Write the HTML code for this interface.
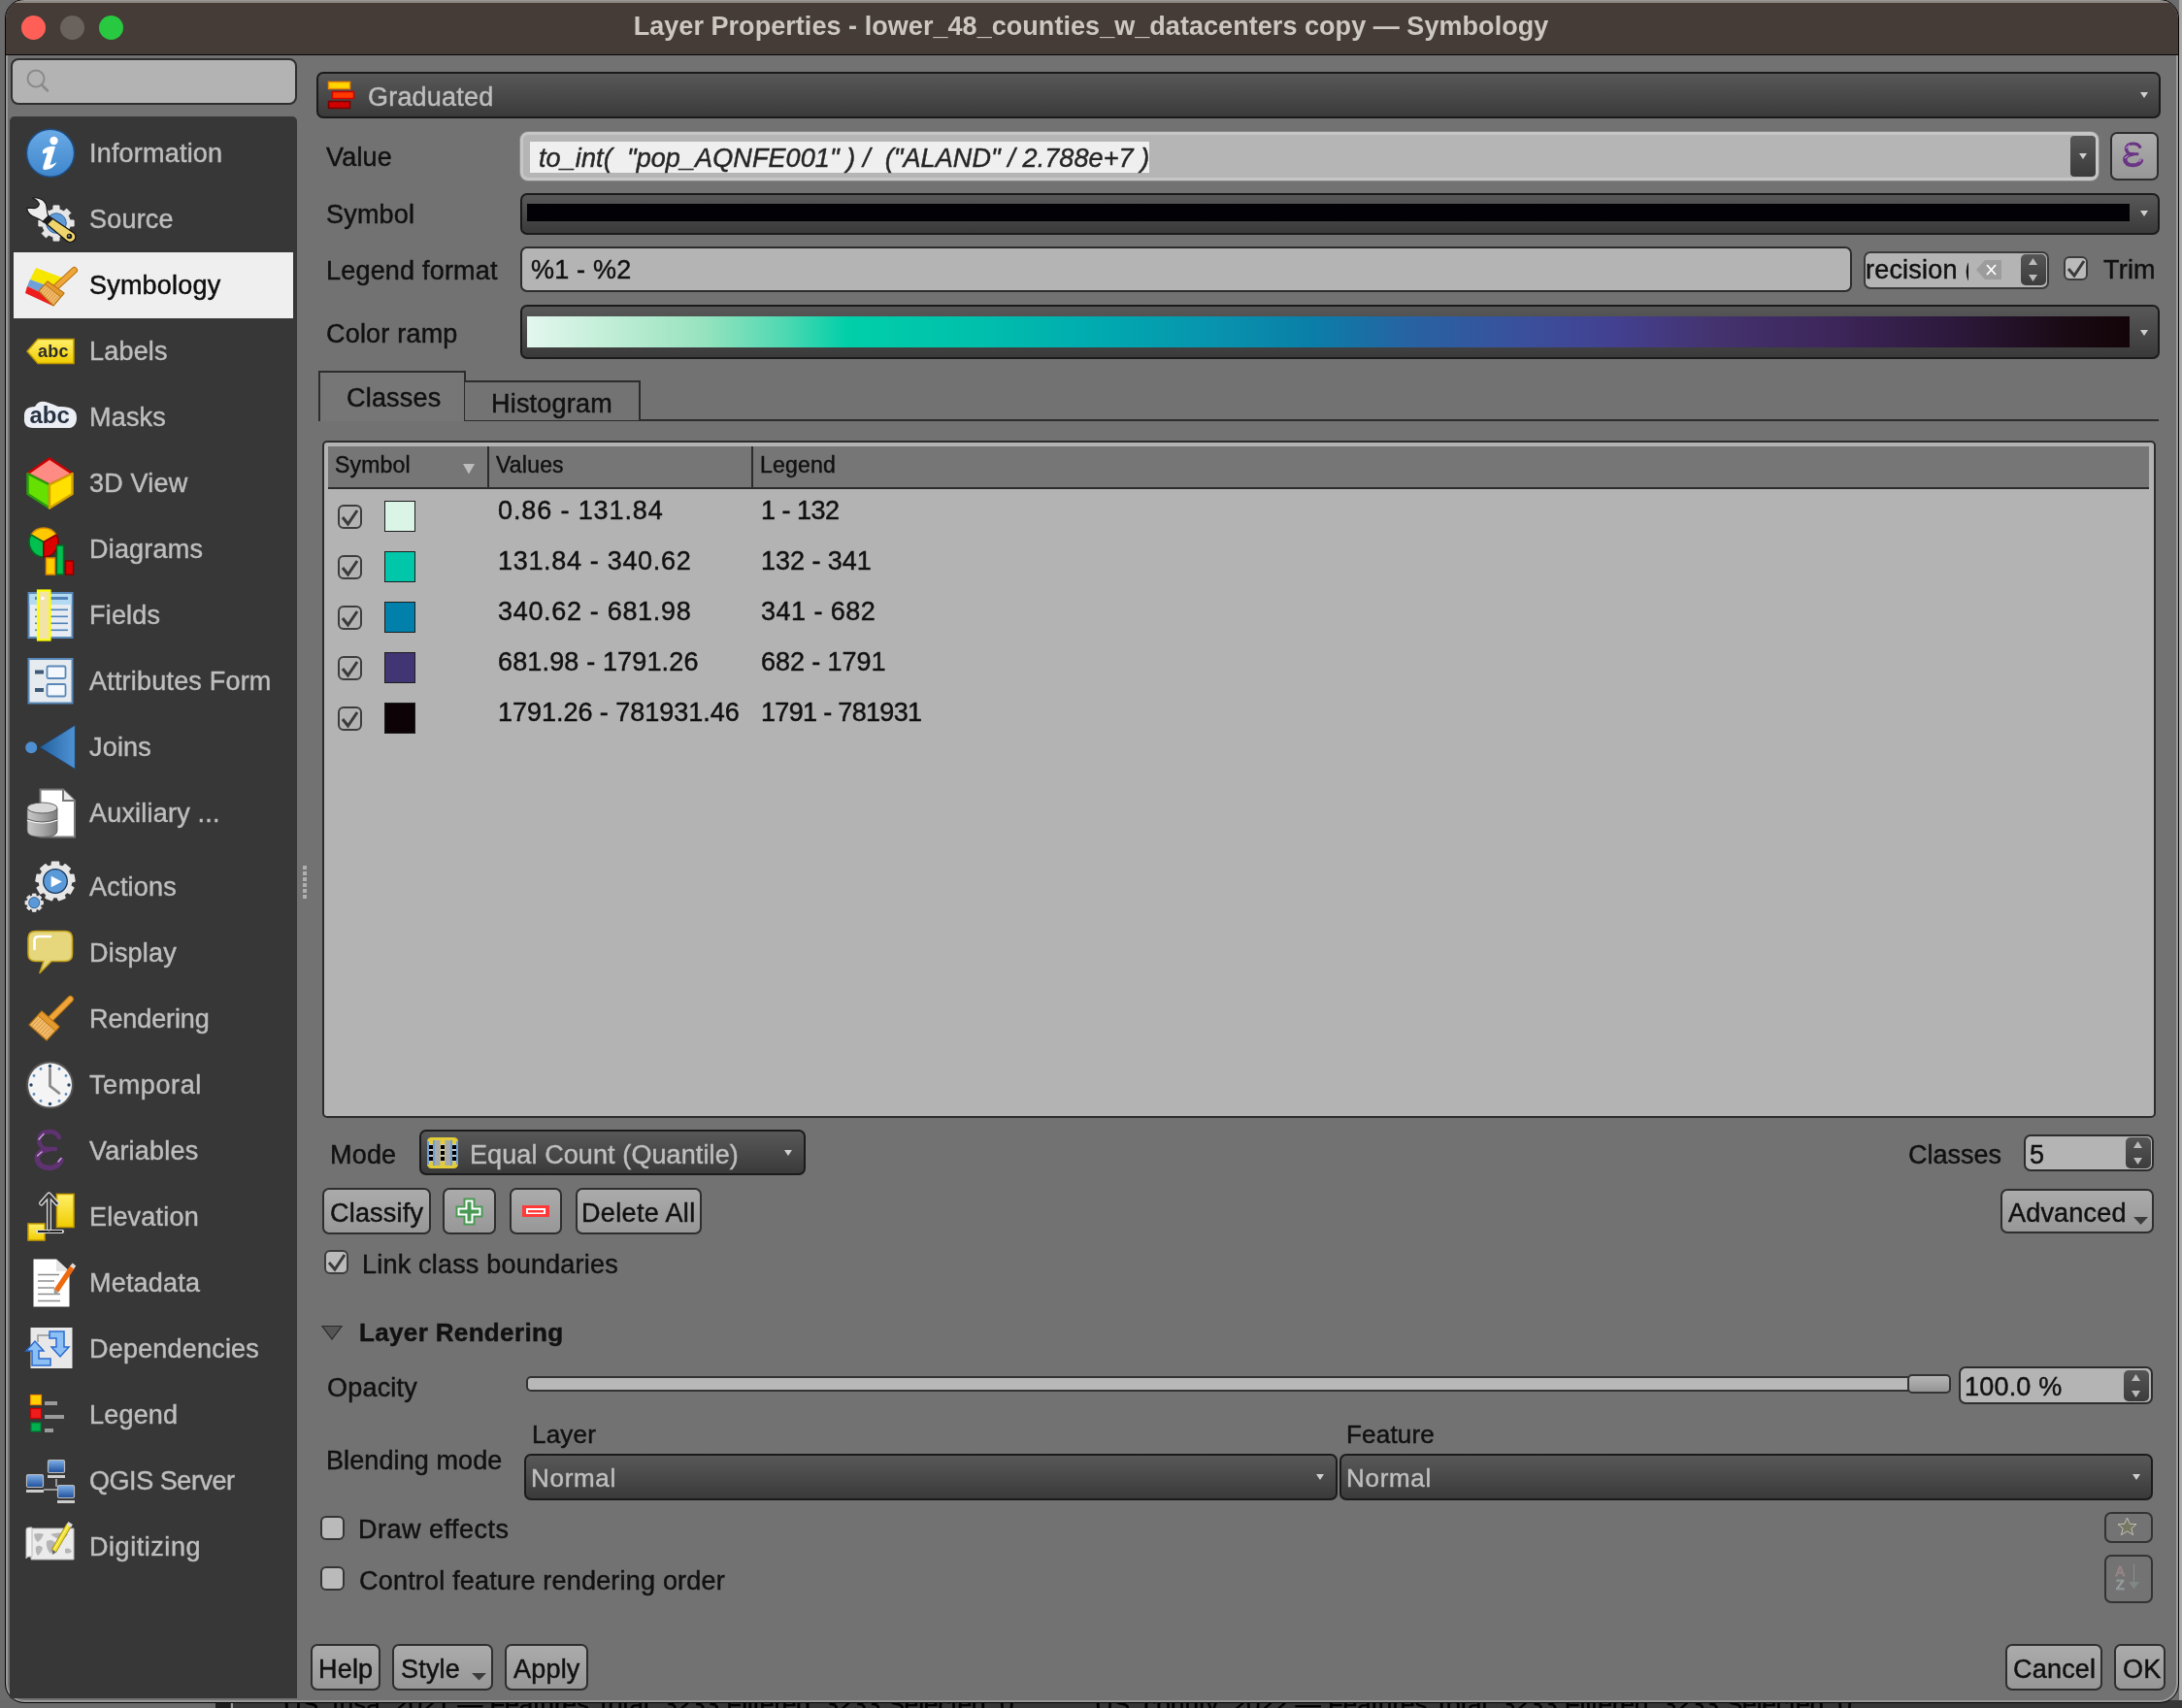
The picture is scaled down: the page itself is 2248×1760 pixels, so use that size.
<!DOCTYPE html>
<html><head><meta charset="utf-8">
<style>
*{box-sizing:border-box;margin:0;padding:0}
html,body{width:2248px;height:1760px;overflow:hidden;background:#6c6c6c;font-family:"Liberation Sans",sans-serif;position:relative}
.a{position:absolute}
.t{position:absolute;white-space:nowrap;font-size:27px;line-height:1;color:#111;-webkit-text-stroke:0.45px currentColor;letter-spacing:0.2px;will-change:transform}
.s{color:#bebebe}
.dark{position:absolute;background:linear-gradient(#585858,#3a3a3a);border:2px solid #1b1b1b;border-radius:7px}
.light{position:absolute;background:#b4b4b4;border:2px solid #2c2c2c;border-radius:7px}
.btn{position:absolute;background:linear-gradient(#ababab,#979797);border:2px solid #2e2e2e;border-radius:7px}
.cb{position:absolute;width:25px;height:25px;border:2px solid #3c3c3c;border-radius:6px;background:#bababa}
.spin{position:absolute;width:26px;background:linear-gradient(#555,#3c3c3c);border-radius:5px}
svg{position:absolute;overflow:visible}
</style></head><body>
<!-- background strip below window -->
<div class="a" style="left:2245px;top:0;width:3px;height:1760px;background:#aaa"></div>
<div class="a" style="left:0;top:1752px;width:2248px;height:8px;background:#363636;overflow:hidden">
  <div class="a" style="left:0;top:0;width:222px;height:8px;background:#6a6a6a"></div>
  <div class="a" style="left:222px;top:0;width:15px;height:8px;background:#1e1e1e"></div><div class="a" style="left:238px;top:0;width:2px;height:8px;background:#9a9a9a"></div>
  <div class="t" style="left:292px;top:-9px;font-size:26px;color:#000;letter-spacing:0">US_tusa_2021 — Features Total: 3233 Filtered: 3233 Selected: 0</div>
  <div class="t" style="left:1128px;top:-9px;font-size:26px;color:#000;letter-spacing:0">US_county_2022 — Features Total: 3233 Filtered: 3233 Selected: 0</div>
</div>
<!-- window -->
<div class="a" style="left:5px;top:-1px;width:2240px;height:1756px;border-radius:20px;background:#727272;border:1px solid #050505;overflow:hidden;box-shadow:inset 0 0 0 2px #999">
  <div class="a" style="left:0;top:3px;width:100%;height:54px;background:#453c37;border-bottom:1px solid #050505"></div>
  <div class="a" style="left:0;top:1px;width:100%;height:2px;background:#8f8781"></div>
</div>
<div class="a" style="left:22px;top:16px;width:25px;height:25px;border-radius:50%;background:#ff5f57"></div>
<div class="a" style="left:62px;top:16px;width:25px;height:25px;border-radius:50%;background:#6a625c"></div>
<div class="a" style="left:102px;top:16px;width:25px;height:25px;border-radius:50%;background:#28c840"></div>
<div class="t" style="left:0;top:14px;width:2248px;text-align:center;font-weight:bold;font-size:27px;color:#cdc7c2;-webkit-text-stroke:0;letter-spacing:0.05px">Layer Properties - lower_48_counties_w_datacenters copy — Symbology</div>

<!-- search -->
<div class="a" style="left:11px;top:60px;width:295px;height:48px;background:#b3b3b3;border:2px solid #2f2f2f;border-radius:8px"></div>
<svg style="left:0;top:0" width="1" height="1"><circle cx="37" cy="81" r="8.5" fill="none" stroke="#8a8a8a" stroke-width="2"/><line x1="43" y1="87.5" x2="49" y2="93.5" stroke="#8a8a8a" stroke-width="2.5" stroke-linecap="round"/></svg>

<!-- sidebar -->
<div class="a" style="left:10px;top:120px;width:296px;height:1630px;background:#373737;border-radius:5px 5px 0 0"></div>
<div class="a" style="left:14px;top:260px;width:288px;height:68px;background:#efefef"></div>
<div class="a" style="left:312px;top:892px;width:4px;height:34px;background:repeating-linear-gradient(#b0b0b0 0 4px,transparent 4px 6px)"></div>

<div class="t s" style="left:92px;top:145px">Information</div>
<div class="t s" style="left:92px;top:213px">Source</div>
<div class="t" style="left:92px;top:281px;color:#0d0d0d">Symbology</div>
<div class="t s" style="left:92px;top:349px">Labels</div>
<div class="t s" style="left:92px;top:417px">Masks</div>
<div class="t s" style="left:92px;top:485px">3D View</div>
<div class="t s" style="left:92px;top:553px">Diagrams</div>
<div class="t s" style="left:92px;top:621px">Fields</div>
<div class="t s" style="left:92px;top:689px">Attributes Form</div>
<div class="t s" style="left:92px;top:757px">Joins</div>
<div class="t s" style="left:92px;top:825px">Auxiliary ...</div>
<div class="t s" style="left:92px;top:901px">Actions</div>
<div class="t s" style="left:92px;top:969px">Display</div>
<div class="t s" style="left:92px;top:1037px;letter-spacing:-0.1px">Rendering</div>
<div class="t s" style="left:92px;top:1105px;letter-spacing:0.6px">Temporal</div>
<div class="t s" style="left:92px;top:1173px">Variables</div>
<div class="t s" style="left:92px;top:1241px">Elevation</div>
<div class="t s" style="left:92px;top:1309px">Metadata</div>
<div class="t s" style="left:92px;top:1377px">Dependencies</div>
<div class="t s" style="left:92px;top:1445px">Legend</div>
<div class="t s" style="left:92px;top:1513px;letter-spacing:-0.45px">QGIS Server</div>
<div class="t s" style="left:92px;top:1581px;letter-spacing:0.55px">Digitizing</div>
<svg style="left:0;top:0" width="1" height="1">
<defs>
  <linearGradient id="gblue" x1="0" y1="0" x2="0" y2="1"><stop offset="0" stop-color="#6aaae6"/><stop offset="1" stop-color="#3f86cc"/></linearGradient>
  <linearGradient id="gjoin" x1="0" y1="0" x2="1" y2="0"><stop offset="0" stop-color="#24609c"/><stop offset="1" stop-color="#4e93d6"/></linearGradient>
  <linearGradient id="gcyl" x1="0" y1="0" x2="1" y2="0"><stop offset="0" stop-color="#c8c8c8"/><stop offset="0.5" stop-color="#a8a8a8"/><stop offset="1" stop-color="#7a7a7a"/></linearGradient>
  <linearGradient id="gyel" x1="0" y1="0" x2="0" y2="1"><stop offset="0" stop-color="#fff06a"/><stop offset="1" stop-color="#f0cc00"/></linearGradient>
  <linearGradient id="gscr" x1="0" y1="0" x2="0" y2="1"><stop offset="0" stop-color="#7fb0e8"/><stop offset="1" stop-color="#1e4f9a"/></linearGradient>
</defs>
<!-- Information -->
<circle cx="52" cy="157.7" r="24.5" fill="url(#gblue)" stroke="#1f4f86" stroke-width="1.5"/>
<circle cx="55.5" cy="145" r="4.2" fill="#fff"/>
<path d="M44 155 Q49 150 57 151 L51.5 170 Q55 169.5 58.5 167 Q55 174.5 46.5 175 Q43.5 175 44.5 171.5 L48.8 157.5 Q46.5 157.5 44 158.5 Z" fill="#fff"/>
<!-- Source -->
<g>
  <path d="M72.2 226.9 L76.1 227.0 L76.1 233.0 L72.2 233.1 L70.2 237.8 L72.9 240.6 L68.6 244.9 L65.8 242.2 L61.1 244.2 L61.0 248.1 L55.0 248.1 L54.9 244.2 L50.2 242.2 L47.4 244.9 L43.1 240.6 L45.8 237.8 L43.8 233.1 L39.9 233.0 L39.9 227.0 L43.8 226.9 L45.8 222.2 L43.1 219.4 L47.4 215.1 L50.2 217.8 L54.9 215.8 L55.0 211.9 L61.0 211.9 L61.1 215.8 L65.8 217.8 L68.6 215.1 L72.9 219.4 L70.2 222.2 Z" fill="#e6e6e6" stroke="#e6e6e6" stroke-width="1" stroke-linejoin="round"/>
  <circle cx="58" cy="230" r="10.3" fill="#5f9bd6" stroke="#3a6aa0" stroke-width="1"/>
  <path d="M33.4 204 C40 203 47 206 48 213 C48.5 218 48.5 221 50.5 223.5 L45 229 C42 226.5 38 224.5 33 222.5 C30 220.5 28 217.5 27.7 214.2 L33 214.5 C36.5 215 39 213.5 40 211.5 C41 209 38 206 33.4 204 Z" fill="#ececec" stroke="#111" stroke-width="1.1" stroke-linejoin="round"/>
  <path d="M50 222.5 L76 240 C78.5 242 78.5 246 76 248 C74 250 70.5 250 68.5 248 L44.5 228 Z" fill="#efd56c" stroke="#111" stroke-width="1.2" stroke-linejoin="round"/>
  <path d="M50 222.5 L54.5 226 L49 231.5 L44.5 228 Z" fill="#1e1e1e"/>
  <circle cx="71.5" cy="243.5" r="2.8" fill="#1a1a1a"/><circle cx="71" cy="243" r="1" fill="#999"/>
</g>
<!-- Symbology -->
<g>
  <path d="M37 276 L64 286 L58 298 L31 288 Z" fill="#f7e600"/>
  <path d="M31 288 L58 298 L52 306 L28 295 Z" fill="#6fa0d8"/>
  <path d="M28 295 L52 306 L54 315 L26 302 Z" fill="#ee1c1c"/>
<path d="M57.5 296.0 L76.5 278.5" stroke="#b8740e" stroke-width="7" stroke-linecap="round"/>
<path d="M57.5 296.0 L76.5 278.5" stroke="#eea53a" stroke-width="5" stroke-linecap="round"/>
<path d="M49 290 L66 302 L55 315 L40 300 Z" fill="#f3bc6a" stroke="#b8740e" stroke-width="1.2" stroke-linejoin="round"/>
<path d="M48.3 294.6 L41.9 301.9 M50.4 296.2 L43.8 303.8 M52.5 297.8 L45.6 305.6 M54.5 299.4 L47.5 307.5 M56.5 301.1 L49.4 309.4 M58.6 302.7 L51.2 311.2 M60.7 304.3 L53.1 313.1" stroke="#c98a3a" stroke-width="0.8"/>
<path d="M49 290 L66 302 L62.7 305.9 L46.3 293.0 Z" fill="#e59a30" stroke="#b8740e" stroke-width="1"/>
</g>
<!-- Labels -->
<path d="M28 362 L39 349.5 L76 349.5 L76 374.5 L39 374.5 Z" fill="url(#gyel)" stroke="#c09a00" stroke-width="1.5"/>
<text x="39" y="368" font-family="Liberation Sans" font-weight="bold" font-size="18" fill="#2b2b2b" letter-spacing="0.3">abc</text>
<!-- Masks -->
<path d="M34 441 Q24 441 25 430 Q24 419 36 419 Q40 411 50 415 Q56 417 60 419 Q79 418 79 430 Q79 442 68 441 Z" fill="#eceef6"/>
<text x="30.5" y="435.5" font-family="Liberation Sans" font-weight="bold" font-size="24" fill="#263241">abc</text>
<!-- 3D View -->
<path d="M51 472.5 L74.5 488 L51 499.5 L28.5 488 Z" fill="#ff8c84" stroke="#cc0000" stroke-width="2.5" stroke-linejoin="round"/>
<path d="M28.5 488 L51 499.5 L51 523.5 L28.5 509 Z" fill="#66e000" stroke="#2a9a10" stroke-width="2.5" stroke-linejoin="round"/>
<path d="M74.5 488 L51 499.5 L51 523.5 L74.5 509 Z" fill="#ffe000" stroke="#d4a200" stroke-width="2.5" stroke-linejoin="round"/>
<!-- Diagrams -->
<path d="M45 558.5 L32 551 A15.5 15.5 0 0 1 58 551 Z" fill="#ffc800" stroke="#d08a00" stroke-width="1.5"/>
<path d="M45 558.5 L32 551 A15.5 15.5 0 0 0 45 574 Z" fill="#00c050" stroke="#006a20" stroke-width="1.5"/>
<path d="M45 558.5 L58 551 A15.5 15.5 0 0 1 45 574 Z" fill="#dd0000" stroke="#880000" stroke-width="1.5"/>
<rect x="47.5" y="575" width="9" height="17" fill="#ffcc00" stroke="#e08a00" stroke-width="1.5"/>
<rect x="58.5" y="562" width="7" height="30" fill="#00c050" stroke="#006a20" stroke-width="1.5"/>
<rect x="67.5" y="578" width="8" height="14" fill="#dd0000" stroke="#880000" stroke-width="1.5"/>
<!-- Fields -->
<rect x="29.5" y="611" width="45" height="46" fill="#e6ecf2" stroke="#5a88b8" stroke-width="2"/>
<rect x="30.5" y="612" width="43" height="11" fill="#b2daf2"/>
<rect x="36" y="615" width="17" height="3" fill="#5082b8"/><rect x="52" y="615" width="18" height="3" fill="#5082b8"/>
<g fill="#5082b8"><rect x="36" y="627.5" width="34" height="1.6"/><rect x="36" y="634.5" width="34" height="1.6"/><rect x="36" y="641.5" width="34" height="1.6"/><rect x="36" y="648.5" width="34" height="1.6"/></g>
<rect x="39" y="608.5" width="12.5" height="51" fill="#f1e4a6" stroke="#ffff00" stroke-width="2.2"/>
<rect x="42.5" y="615" width="3" height="3" fill="#fff"/>
<!-- Attributes Form -->
<rect x="29.5" y="679" width="45" height="45.5" fill="#e6ebf0" stroke="#5a88b8" stroke-width="2"/>
<rect x="36" y="690.5" width="9" height="4" fill="#3d5a78"/><rect x="36" y="709" width="9" height="4" fill="#3d5a78"/>
<rect x="48.5" y="686.5" width="19" height="12.5" rx="1.5" fill="#f4f8fc" stroke="#5a88b8" stroke-width="1.8"/>
<rect x="48.5" y="705" width="19" height="12.5" rx="1.5" fill="#f4f8fc" stroke="#5a88b8" stroke-width="1.8"/>
<!-- Joins -->
<circle cx="32.2" cy="770.2" r="6" fill="#4e8fd4"/>
<path d="M40.8 770 L77.3 747.3 L77.3 792.4 Z" fill="url(#gjoin)" stroke="#1e3e66" stroke-width="0.8"/>
<!-- Auxiliary -->
<path d="M41.5 813.5 L65 813.5 L77 825 L77 862.5 L41.5 862.5 Z" fill="#fff" stroke="#777" stroke-width="2"/>
<path d="M65 813.5 L65 825 L77 825" fill="#e8e8e8" stroke="#777" stroke-width="2"/>
<path d="M28 833 L28 856 Q28 862.5 43.5 862.5 Q59 862.5 59 856 L59 833 Z" fill="url(#gcyl)" stroke="#555" stroke-width="0.8"/>
<ellipse cx="43.5" cy="832.5" rx="15.5" ry="5.5" fill="#d8d8d8" stroke="#444" stroke-width="0.8"/>
<path d="M28 845 Q43.5 851 59 845" fill="none" stroke="#eee" stroke-width="1.5"/>
<path d="M28 844 Q43.5 850 59 844" fill="none" stroke="#444" stroke-width="0.8"/>
<!-- Actions -->
<g>
  <path d="M53.3 891.9 L53.5 888.3 L60.5 888.3 L60.7 891.9 L64.5 893.3 L67.0 890.7 L72.3 895.1 L70.2 898.1 L72.2 901.6 L75.8 901.2 L77.0 908.0 L73.5 908.9 L72.8 912.8 L75.8 914.8 L72.3 920.9 L69.1 919.3 L66.0 921.8 L67.0 925.3 L60.5 927.7 L59.0 924.4 L55.0 924.4 L53.5 927.7 L47.0 925.3 L48.0 921.8 L44.9 919.3 L41.7 920.9 L38.2 914.8 L41.2 912.8 L40.5 908.9 L37.0 908.0 L38.2 901.2 L41.8 901.6 L43.8 898.1 L41.7 895.1 L47.0 890.7 L49.5 893.3 Z" fill="#e6e6e6" stroke="#e6e6e6" stroke-width="1.5" stroke-linejoin="round"/>
  <circle cx="57" cy="908" r="12.3" fill="#5b9ad8" stroke="#16365c" stroke-width="1.3"/>
  <path d="M52.7 902.8 L63.8 908.5 L52.7 914.2 Z" fill="#fff"/>
  <path d="M42.3 928.4 L44.3 928.4 L44.3 932.0 L42.3 932.0 L41.5 933.9 L42.9 935.4 L40.4 937.9 L38.9 936.5 L37.0 937.3 L37.0 939.3 L33.4 939.3 L33.4 937.3 L31.5 936.5 L30.0 937.9 L27.5 935.4 L28.9 933.9 L28.1 932.0 L26.1 932.0 L26.1 928.4 L28.1 928.4 L28.9 926.5 L27.5 925.0 L30.0 922.5 L31.5 923.9 L33.4 923.1 L33.4 921.1 L37.0 921.1 L37.0 923.1 L38.9 923.9 L40.4 922.5 L42.9 925.0 L41.5 926.5 Z" fill="#e6e6e6" stroke="#e6e6e6" stroke-width="1" stroke-linejoin="round"/>
  <circle cx="35.2" cy="930.2" r="5.6" fill="#5b9ad8" stroke="#244a7a" stroke-width="0.8"/>
</g>
<!-- Display -->
<path d="M37 959.5 L67 959.5 Q74.5 959.5 74.5 967 L74.5 983 Q74.5 990.5 67 990.5 L53 990.5 L41 1002.5 L45 990.5 L37 990.5 Q29 990.5 29 983 L29 967 Q29 959.5 37 959.5 Z" fill="#e6d67c" stroke="#c4a21c" stroke-width="1.6" stroke-linejoin="round"/>
<path d="M35.5 978 L35.5 969 Q35.5 965 40 965 L52 965" fill="none" stroke="#fff" stroke-width="2.6" stroke-linecap="round"/>
<!-- Rendering -->
<path d="M52.0 1050.0 L72.5 1029.5" stroke="#b8740e" stroke-width="7" stroke-linecap="round"/>
<path d="M52.0 1050.0 L72.5 1029.5" stroke="#eea53a" stroke-width="5" stroke-linecap="round"/>
<path d="M43 1042 L61 1058 L48 1072 L30 1056 Z" fill="#f3bc6a" stroke="#b8740e" stroke-width="1.2" stroke-linejoin="round"/>
<path d="M41.4 1048.2 L32.2 1058.0 M43.6 1050.2 L34.5 1060.0 M45.9 1052.2 L36.8 1062.0 M48.1 1054.2 L39.0 1064.0 M50.4 1056.2 L41.2 1066.0 M52.6 1058.2 L43.5 1068.0 M54.9 1060.2 L45.8 1070.0" stroke="#c98a3a" stroke-width="0.8"/>
<path d="M43 1042 L61 1058 L57.1 1062.2 L39.1 1046.2 Z" fill="#e59a30" stroke="#b8740e" stroke-width="1"/>
<!-- Temporal -->
<circle cx="51.5" cy="1118" r="23.5" fill="#f4f4f4" stroke="#555" stroke-width="2"/>
<g fill="#24466a"><circle cx="51.5" cy="1098.5" r="1.7"/><circle cx="51.5" cy="1137.5" r="1.7"/><circle cx="32" cy="1118" r="1.7"/><circle cx="71" cy="1118" r="1.7"/></g><g fill="#5a8cc4">
<circle cx="61" cy="1101.5" r="1.4"/><circle cx="68" cy="1108.5" r="1.4"/><circle cx="68" cy="1127.5" r="1.4"/><circle cx="61" cy="1134.5" r="1.4"/><circle cx="42" cy="1134.5" r="1.4"/><circle cx="35" cy="1127.5" r="1.4"/><circle cx="35" cy="1108.5" r="1.4"/><circle cx="42" cy="1101.5" r="1.4"/></g>
<path d="M51.5 1101.5 L51.5 1119 L61 1126.5" fill="none" stroke="#8a8a8a" stroke-width="2.8" stroke-linecap="round"/>
<!-- Variables -->
<path d="M61 1172 C58 1166 52 1165.5 47 1166.5 C41 1168 39.5 1173 40.5 1177 C41.5 1181 45 1184 49 1184 L57 1184" fill="none" stroke="#5f3271" stroke-width="4.5" stroke-linecap="round"/>
<path d="M49 1184.5 C42 1185 37.5 1190 38.5 1195 C39.5 1201 45 1203.5 51 1203.5 C57 1203.5 61 1200 63 1195.5" fill="none" stroke="#5f3271" stroke-width="5.5" stroke-linecap="round"/>
<path d="M40 1174 L45 1168.5 M38.5 1191 L43 1187 M60 1197 L63 1193.5" stroke="#c9a2da" stroke-width="1.5" stroke-linecap="round"/>
<!-- Elevation -->
<rect x="29" y="1261" width="17" height="17" fill="url(#gyel)" stroke="#c9a000" stroke-width="1.5"/>
<rect x="58.5" y="1230.5" width="17.5" height="34" fill="url(#gyel)" stroke="#c9a000" stroke-width="1.5"/>
<path d="M39 1269 L64 1269" stroke="#ddd" stroke-width="4" stroke-linecap="round"/><path d="M39 1269 L64 1269" stroke="#222" stroke-width="2"/>
<path d="M50.5 1266 L50.5 1232 M42.5 1240 L50.5 1231 L58.5 1240" fill="none" stroke="#ddd" stroke-width="5" stroke-linecap="round" stroke-linejoin="round"/>
<path d="M50.5 1266 L50.5 1232 M42.5 1240 L50.5 1231 L58.5 1240" fill="none" stroke="#333" stroke-width="2.5" stroke-linecap="round" stroke-linejoin="round"/>
<!-- Metadata -->
<path d="M34.5 1297.5 L58 1297.5 L71.5 1310 L71.5 1346.5 L34.5 1346.5 Z" fill="#fff"/>
<path d="M58 1297.5 L58 1310 L71.5 1310 Z" fill="#e4e4e4"/>
<g stroke="#8e8e8e" stroke-width="1.6"><path d="M39 1313.5 H61 M39 1320 H56 M39 1327 H56 M39 1333.5 H62 M39 1340.5 H62"/></g>
<path d="M75 1305 L58 1330" stroke="#ee6a10" stroke-width="5.5"/>
<path d="M73.5 1303 L77 1306" stroke="#ddd" stroke-width="4"/>
<path d="M55.5 1328 L60.5 1332 L56 1334 Z" fill="#999"/>
<!-- Dependencies -->
<rect x="31.5" y="1368" width="43" height="42" fill="#e8e8e8"/>
<path d="M39 1383 L39 1376 L52 1376" fill="none" stroke="#aaa" stroke-width="2"/>
<path d="M51 1372 L66 1372 L66 1388 L71 1388 L62 1398 L53 1388 L58 1388 L58 1379 L51 1379 Z" fill="#8cc0f4" stroke="#2a6ad0" stroke-width="1.5"/>
<path d="M27 1392 L36 1382 L45 1392 L40 1392 L40 1400 L52 1400 L52 1407 L33 1407 L33 1392 Z" fill="#8cc0f4" stroke="#2a6ad0" stroke-width="1.5"/>
<!-- Legend -->
<rect x="31.5" y="1437.5" width="11" height="10" fill="#ffd000" stroke="#f08800" stroke-width="1.2"/>
<rect x="31.5" y="1451.5" width="11" height="10" fill="#ee1c1c" stroke="#cc0000" stroke-width="1.2"/>
<rect x="32" y="1466" width="10" height="9" fill="#00b050" stroke="#007a30" stroke-width="1.2"/>
<rect x="46" y="1444" width="13" height="4" fill="#9a9a9a"/><rect x="46" y="1458" width="20" height="4" fill="#9a9a9a"/><rect x="46" y="1472" width="9" height="4" fill="#9a9a9a"/>
<!-- QGIS Server -->
<g>
  <rect x="49.5" y="1504.5" width="17" height="13" rx="1.5" fill="url(#gscr)" stroke="#bbb" stroke-width="1.2"/><rect x="49" y="1520" width="18" height="3" fill="#ccc"/>
  <rect x="27.5" y="1519.5" width="17" height="13" rx="1.5" fill="url(#gscr)" stroke="#bbb" stroke-width="1.2"/><rect x="27" y="1535" width="18" height="3" fill="#ccc"/>
  <rect x="59.5" y="1530.5" width="17" height="13" rx="1.5" fill="url(#gscr)" stroke="#bbb" stroke-width="1.2"/><rect x="59" y="1546" width="18" height="3" fill="#ccc"/>
  <path d="M58 1524 L58 1532 M45 1535 L59 1535" stroke="#bbb" stroke-width="1.5"/>
</g>
<!-- Digitizing -->
<path d="M32 1575 L76 1575 L76 1607 L32 1607 Z" fill="#ebebeb" stroke="#bdbdbd" stroke-width="1"/>
<path d="M27 1576 Q27 1574 30 1574 L33 1574 L33 1604 L30 1604 Q27 1604 27 1606 Z" fill="#f2f2f2" stroke="#bdbdbd" stroke-width="1"/>
<path d="M35 1581 Q40 1579 45 1581 Q43 1586 39 1589 Q36 1587 35 1581 Z M37 1594 Q41 1591 44 1595 Q42 1601 39 1603 Q36 1599 37 1594 Z M48 1588 Q54 1585 57 1590 Q55 1598 52 1601 Q47 1596 48 1588 Z M52 1581 Q60 1578 70 1581 Q66 1587 58 1585 Z M67 1596 Q72 1594 74 1599 Q70 1602 67 1600 Z" fill="#b5b5b5"/>
<path d="M71 1571.5 L55.5 1598" stroke="#8a7a10" stroke-width="6"/>
<path d="M71 1571.5 L55.5 1598" stroke="#f0de2a" stroke-width="4.5"/>
<path d="M70.2 1572 L56 1596.5" stroke="#fff6a0" stroke-width="1"/>
<path d="M69.5 1569.5 L74 1572.5" stroke="#ddd" stroke-width="3.5"/>
<path d="M53.5 1596.5 L58 1599.5 L54 1602 Z" fill="#666"/>
</svg>


<!-- Graduated combo -->
<div class="dark" style="left:326px;top:74px;width:1900px;height:48px"></div>
<svg style="left:0;top:0" width="1" height="1">
  <rect x="338.5" y="84.5" width="22" height="7" fill="#ffd800" stroke="#f08a00" stroke-width="1.5"/>
  <rect x="342.5" y="94.5" width="22" height="7" fill="#ff3a00" stroke="#d40000" stroke-width="1.5"/>
  <rect x="338.5" y="104.5" width="22" height="7" fill="#d00000" stroke="#7a0000" stroke-width="1.5"/>
  <path d="M2205 95 L2213 95 L2209 101 Z" fill="#d0d0d0"/>
</svg>
<div class="t s" style="left:379px;top:87px">Graduated</div>

<!-- labels -->
<div class="t" style="left:336px;top:149px">Value</div>
<div class="t" style="left:336px;top:208px">Symbol</div>
<div class="t" style="left:336px;top:266px">Legend format</div>
<div class="t" style="left:336px;top:331px">Color ramp</div>
<!-- Value field -->
<div class="a" style="left:536px;top:136px;width:1626px;height:50px;background:#b5b5b5;border:3px solid #c6c6c6;border-radius:8px;box-shadow:0 0 0 1px #8a8a8a"></div>
<div class="a" style="left:546px;top:146px;width:638px;height:32px;background:#efefef"></div>
<div class="t" style="left:555px;top:150px;font-style:italic;color:#262626;letter-spacing:0.1px">to_int(&nbsp; "pop_AQNFE001" ) /&nbsp; ("ALAND" / 2.788e+7 )</div>
<div class="a" style="left:2133px;top:140px;width:26px;height:42px;background:linear-gradient(#575757,#3a3a3a);border-radius:4px"></div>
<svg style="left:0;top:0" width="1" height="1"><path d="M2142 158 L2150 158 L2146 164 Z" fill="#d0d0d0"/></svg>
<div class="btn" style="left:2174px;top:136px;width:50px;height:50px"></div>
<svg style="left:0;top:0" width="1" height="1"><g transform="translate(2163.2 -545.8) scale(0.68 0.595)">
<path d="M61 1172 C58 1166 52 1165.5 47 1166.5 C41 1168 39.5 1173 40.5 1177 C41.5 1181 45 1184 49 1184 L57 1184" fill="none" stroke="#6a3584" stroke-width="5" stroke-linecap="round"/>
<path d="M49 1184.5 C42 1185 37.5 1190 38.5 1195 C39.5 1201 45 1203.5 51 1203.5 C57 1203.5 61 1200 63 1195.5" fill="none" stroke="#6a3584" stroke-width="6.5" stroke-linecap="round"/>
<path d="M40 1174 L45 1168.5 M38.5 1191 L43 1187 M60 1197 L63 1193.5" stroke="#c9a2da" stroke-width="1.5" stroke-linecap="round"/></g></svg>

<!-- Symbol combo -->
<div class="dark" style="left:536px;top:199px;width:1689px;height:43px"></div>
<div class="a" style="left:543px;top:210px;width:1651px;height:18px;background:#020206"></div>
<svg style="left:0;top:0" width="1" height="1"><path d="M2205 217 L2213 217 L2209 223 Z" fill="#d0d0d0"/></svg>

<!-- Legend format -->
<div class="light" style="left:536px;top:254px;width:1372px;height:47px"></div>
<div class="t" style="left:547px;top:265px">%1 - %2</div>
<div class="light" style="left:1920px;top:259px;width:191px;height:39px;border-color:#3a3a3a"></div>
<div class="a" style="left:1922px;top:259px;width:106px;height:37px;overflow:hidden"><div class="t" style="left:0px;top:6px;">recision (</div></div>
<svg style="left:0;top:0" width="1" height="1">
  <path d="M2036 278 L2045 268 L2062 268 L2062 288 L2045 288 Z" fill="#9c9c9c"/>
  <path d="M2047 273 L2056 283 M2056 273 L2047 283" stroke="#fff" stroke-width="1.8"/>
</svg>
<div class="spin" style="left:2082px;top:262px;height:32px"></div>
<svg style="left:0;top:0" width="1" height="1">
  <path d="M2090 273 L2099 273 L2094.5 266 Z" fill="#bbb"/><path d="M2090 283 L2099 283 L2094.5 290 Z" fill="#bbb"/>
</svg>
<div class="cb" style="left:2126px;top:264px"></div>
<svg style="left:0;top:0" width="1" height="1"><path d="M2131 277 L2137 284 L2147 269" fill="none" stroke="#3a3a3a" stroke-width="3"/></svg>
<div class="t" style="left:2167px;top:265px">Trim</div>

<!-- Color ramp -->
<div class="dark" style="left:536px;top:314px;width:1689px;height:56px"></div>
<div class="a" style="left:543px;top:326px;width:1651px;height:32px;background:linear-gradient(90deg,#e3f7ee 0%,#c2eed7 5%,#97e3bf 11%,#4fd9b2 16%,#00cfa9 20%,#00c0ac 28%,#00a9b0 36%,#0893ae 43%,#0a7ea8 49%,#2763a3 55%,#3a509c 62%,#434090 68%,#44336f 74%,#3c2558 82%,#2a1737 90%,#1a0a14 96%,#120408 100%)"></div>
<svg style="left:0;top:0" width="1" height="1"><path d="M2205 340 L2213 340 L2209 346 Z" fill="#d0d0d0"/></svg>

<!-- Tabs -->
<div class="a" style="left:479px;top:432px;width:1745px;height:2px;background:#2c2c2c"></div>
<div class="a" style="left:328px;top:382px;width:152px;height:52px;border:2px solid #2c2c2c;border-bottom:none;background:#767676"></div>
<div class="a" style="left:479px;top:392px;width:181px;height:41px;border:2px solid #2c2c2c;border-left:none;border-bottom:none;background:#737373"></div>
<div class="t" style="left:357px;top:397px">Classes</div>
<div class="t" style="left:506px;top:403px">Histogram</div>

<!-- Table -->
<div class="a" style="left:332px;top:454px;width:1889px;height:698px;background:#b3b3b3;border:2px solid #2c2c2c;border-radius:5px"></div>
<div class="a" style="left:338px;top:460px;width:1876px;height:44px;background:#767676;border-bottom:2px solid #2c2c2c"></div>
<div class="a" style="left:502px;top:460px;width:2px;height:43px;background:#2c2c2c"></div>
<div class="a" style="left:774px;top:460px;width:2px;height:43px;background:#2c2c2c"></div>
<div class="t" style="left:345px;top:468px;font-size:23px">Symbol</div>
<svg style="left:0;top:0" width="1" height="1"><path d="M477 478 L489 478 L483 488.5 Z" fill="#bdbdbd"/></svg>
<div class="t" style="left:511px;top:468px;font-size:23px">Values</div>
<div class="t" style="left:783px;top:468px;font-size:23px">Legend</div>
<div class="cb" style="left:348px;top:520px;background:#b3b3b3;border-color:#3d3d3d"></div>
<svg style="left:0;top:0" width="1" height="1"><path d="M353 533 L358.5 540 L368 526" fill="none" stroke="#3a3a3a" stroke-width="3"/></svg>
<div class="a" style="left:396px;top:516px;width:32px;height:32px;background:#daf5e6;border:1.5px solid #1e1e1e"></div>
<div class="t" style="left:512.6px;top:513px;letter-spacing:0.88px">0.86 - 131.84</div>
<div class="t" style="left:784.3px;top:513px;letter-spacing:-0.50px">1 - 132</div>
<div class="cb" style="left:348px;top:572px;background:#b3b3b3;border-color:#3d3d3d"></div>
<svg style="left:0;top:0" width="1" height="1"><path d="M353 585 L358.5 592 L368 578" fill="none" stroke="#3a3a3a" stroke-width="3"/></svg>
<div class="a" style="left:396px;top:568px;width:32px;height:32px;background:#00c6aa;border:1.5px solid #1e1e1e"></div>
<div class="t" style="left:512.6px;top:565px;letter-spacing:0.68px">131.84 - 340.62</div>
<div class="t" style="left:784.3px;top:565px;letter-spacing:-0.04px">132 - 341</div>
<div class="cb" style="left:348px;top:624px;background:#b3b3b3;border-color:#3d3d3d"></div>
<svg style="left:0;top:0" width="1" height="1"><path d="M353 637 L358.5 644 L368 630" fill="none" stroke="#3a3a3a" stroke-width="3"/></svg>
<div class="a" style="left:396px;top:620px;width:32px;height:32px;background:#0080ab;border:1.5px solid #1e1e1e"></div>
<div class="t" style="left:512.6px;top:617px;letter-spacing:0.68px">340.62 - 681.98</div>
<div class="t" style="left:784.3px;top:617px;letter-spacing:0.47px">341 - 682</div>
<div class="cb" style="left:348px;top:676px;background:#b3b3b3;border-color:#3d3d3d"></div>
<svg style="left:0;top:0" width="1" height="1"><path d="M353 689 L358.5 696 L368 682" fill="none" stroke="#3a3a3a" stroke-width="3"/></svg>
<div class="a" style="left:396px;top:672px;width:32px;height:32px;background:#413573;border:1.5px solid #1e1e1e"></div>
<div class="t" style="left:512.6px;top:669px;letter-spacing:0.15px">681.98 - 1791.26</div>
<div class="t" style="left:784.3px;top:669px;letter-spacing:-0.07px">682 - 1791</div>
<div class="cb" style="left:348px;top:728px;background:#b3b3b3;border-color:#3d3d3d"></div>
<svg style="left:0;top:0" width="1" height="1"><path d="M353 741 L358.5 748 L368 734" fill="none" stroke="#3a3a3a" stroke-width="3"/></svg>
<div class="a" style="left:396px;top:724px;width:32px;height:32px;background:#0d0306;border:1.5px solid #1e1e1e"></div>
<div class="t" style="left:512.6px;top:721px;letter-spacing:-0.03px">1791.26 - 781931.46</div>
<div class="t" style="left:784.3px;top:721px;letter-spacing:-0.68px">1791 - 781931</div>
<!-- Mode row -->
<div class="t" style="left:340px;top:1177px">Mode</div>
<div class="dark" style="left:432px;top:1164px;width:398px;height:47px"></div>
<svg style="left:0;top:0" width="1" height="1">
  <rect x="440" y="1172" width="32" height="32" rx="4.5" fill="#e2cc3a"/>
  <rect x="448" y="1175" width="5.5" height="26" fill="#aaa9aa"/><rect x="458.5" y="1175" width="5.5" height="26" fill="#aaa9aa"/>
  <rect x="440" y="1176" width="2" height="24" fill="#6f9fd0"/><rect x="446" y="1175" width="2" height="26" fill="#6f9fd0"/><rect x="464" y="1175" width="2" height="26" fill="#6f9fd0"/><rect x="470" y="1176" width="2" height="24" fill="#6f9fd0"/>
  <g fill="#c9c9c9"><rect x="442" y="1179" width="4" height="18"/><rect x="454" y="1179" width="4" height="18"/><rect x="466" y="1179" width="4" height="18"/></g>
  <g fill="#000"><rect x="442" y="1180" width="4" height="4"/><rect x="442" y="1186" width="4" height="4"/><rect x="442" y="1192" width="4" height="4"/>
  <rect x="454" y="1180" width="4" height="4"/><rect x="454" y="1186" width="4" height="4"/><rect x="454" y="1192" width="4" height="4"/>
  <rect x="466" y="1180" width="4" height="4"/><rect x="466" y="1186" width="4" height="4"/><rect x="466" y="1192" width="4" height="4"/></g>
  <path d="M808 1185 L816 1185 L812 1191 Z" fill="#d0d0d0"/>
</svg>
<div class="t s" style="left:484px;top:1177px;letter-spacing:0.1px">Equal Count (Quantile)</div>
<div class="t" style="left:1966px;top:1177px;letter-spacing:0px">Classes</div>
<div class="light" style="left:2085px;top:1169px;width:134px;height:38px"></div>
<div class="t" style="left:2091px;top:1177px">5</div>
<div class="spin" style="left:2190px;top:1172px;height:32px"></div>
<svg style="left:0;top:0" width="1" height="1">
  <path d="M2198 1183 L2207 1183 L2202.5 1176 Z" fill="#bbb"/><path d="M2198 1193 L2207 1193 L2202.5 1200 Z" fill="#bbb"/>
</svg>

<!-- buttons -->
<div class="btn" style="left:332px;top:1224px;width:112px;height:48px"></div>
<div class="t" style="left:340px;top:1237px">Classify</div>
<div class="btn" style="left:456px;top:1224px;width:55px;height:48px"></div>
<svg style="left:0;top:0" width="1" height="1">
  <path d="M478.5 1235.5 h10 v8 h8 v10 h-8 v8 h-10 v-8 h-8 v-10 h8 Z" fill="#fff" stroke="#4a9a55" stroke-width="2"/>
  <path d="M481.5 1238.5 h4 v8 h8 v4 h-8 v8 h-4 v-8 h-8 v-4 h8 Z" fill="#4a9a55"/>
</svg>
<div class="btn" style="left:525px;top:1224px;width:54px;height:48px"></div>
<svg style="left:0;top:0" width="1" height="1">
  <rect x="538" y="1242" width="28" height="12" fill="#ff3a3a"/><rect x="542" y="1245" width="20" height="6" fill="#fff"/><rect x="544" y="1247" width="16" height="2.5" fill="#ff3a3a"/>
</svg>
<div class="btn" style="left:593px;top:1224px;width:130px;height:48px"></div>
<div class="t" style="left:599px;top:1237px;letter-spacing:0.35px">Delete All</div>
<div class="btn" style="left:2061px;top:1225px;width:158px;height:46px"></div>
<div class="t" style="left:2069px;top:1237px">Advanced</div>
<svg style="left:0;top:0" width="1" height="1"><path d="M2198 1254 L2213 1254 L2205.5 1262 Z" fill="#3c3c3c"/></svg>

<div class="cb" style="left:334px;top:1288px"></div>
<svg style="left:0;top:0" width="1" height="1"><path d="M339 1301 L345 1308 L355 1293" fill="none" stroke="#3a3a3a" stroke-width="3"/></svg>
<div class="t" style="left:373px;top:1290px">Link class boundaries</div>

<svg style="left:0;top:0" width="1" height="1"><path d="M332 1366.5 L352 1366.5 L342 1380 Z" fill="#555" stroke="#2a2a2a" stroke-width="1.2"/></svg>
<div class="t" style="left:370px;top:1360px;font-weight:bold;font-size:26px;letter-spacing:0.35px">Layer Rendering</div>
<div class="t" style="left:337px;top:1417px">Opacity</div>
<div class="a" style="left:542px;top:1418px;width:1430px;height:16px;background:#b8b8b8;border:2px solid #333;border-radius:5px"></div>
<div class="a" style="left:1965px;top:1416px;width:45px;height:20px;background:linear-gradient(#b5b5b5,#959595);border:2px solid #333;border-radius:5px"></div>
<div class="light" style="left:2018px;top:1408px;width:200px;height:39px"></div>
<div class="t" style="left:2024px;top:1416px">100.0 %</div>
<div class="spin" style="left:2188px;top:1412px;height:32px"></div>
<svg style="left:0;top:0" width="1" height="1">
  <path d="M2196 1423 L2205 1423 L2200.5 1416 Z" fill="#bbb"/><path d="M2196 1433 L2205 1433 L2200.5 1440 Z" fill="#bbb"/>
</svg>

<div class="t" style="left:336px;top:1492px;letter-spacing:0.1px">Blending mode</div>
<div class="t" style="left:548px;top:1465px;font-size:26px">Layer</div>
<div class="t" style="left:1387px;top:1465px;font-size:26px">Feature</div>
<div class="dark" style="left:540px;top:1498px;width:838px;height:48px"></div>
<div class="dark" style="left:1380px;top:1498px;width:838px;height:48px"></div>
<svg style="left:0;top:0" width="1" height="1">
  <path d="M1356 1519 L1364 1519 L1360 1525 Z" fill="#d0d0d0"/>
  <path d="M2197 1519 L2205 1519 L2201 1525 Z" fill="#d0d0d0"/>
</svg>
<div class="t s" style="left:547px;top:1510px;font-size:26px;letter-spacing:0.7px">Normal</div>
<div class="t s" style="left:1387px;top:1510px;font-size:26px;letter-spacing:0.7px">Normal</div>

<div class="cb" style="left:330px;top:1562px;border-color:#353535"></div>
<div class="t" style="left:369px;top:1563px;letter-spacing:0.5px">Draw effects</div>
<div class="cb" style="left:330px;top:1614px;border-color:#353535"></div>
<div class="t" style="left:370px;top:1616px">Control feature rendering order</div>

<div class="btn" style="left:2168px;top:1558px;width:50px;height:32px;background:#737373;border-color:#333"></div>
<svg style="left:0;top:0" width="1" height="1">
  <path d="M2191.5 1564 L2194.2 1570.3 L2201 1570.6 L2195.8 1575 L2197.6 1581.6 L2191.5 1577.8 L2185.4 1581.6 L2187.2 1575 L2182 1570.6 L2188.8 1570.3 Z" fill="#777763" stroke="#c9c9bd" stroke-width="0.9" stroke-linejoin="round"/>
</svg>
<div class="btn" style="left:2168px;top:1602px;width:50px;height:50px;background:#737373;border-color:#333"></div>
<svg style="left:0;top:0" width="1" height="1">
  <text x="2179.5" y="1623.5" font-family="Liberation Sans" font-size="14" fill="none" stroke="#a58c90" stroke-width="0.7">A</text>
  <text x="2180" y="1637.5" font-family="Liberation Sans" font-size="14" fill="none" stroke="#a4aeb0" stroke-width="0.7">Z</text>
  <path d="M2198.5 1612 L2198.5 1631" stroke="#8a9090" stroke-width="1"/><path d="M2193 1630 L2204 1630 L2198.5 1637.5 Z" fill="#7f8787"/>
</svg>

<div class="btn" style="left:320px;top:1694px;width:72px;height:48px"></div>
<div class="t" style="left:328px;top:1707px">Help</div>
<div class="btn" style="left:404px;top:1694px;width:104px;height:48px"></div>
<div class="t" style="left:413px;top:1707px">Style</div>
<svg style="left:0;top:0" width="1" height="1"><path d="M486 1724 L501 1724 L493.5 1731.5 Z" fill="#3c3c3c"/></svg>
<div class="btn" style="left:520px;top:1694px;width:86px;height:48px"></div>
<div class="t" style="left:529px;top:1707px">Apply</div>
<div class="btn" style="left:2066px;top:1694px;width:100px;height:48px"></div>
<div class="t" style="left:2074px;top:1707px">Cancel</div>
<div class="btn" style="left:2178px;top:1694px;width:53px;height:48px"></div>
<div class="t" style="left:2187px;top:1707px">OK</div>

</body></html>
